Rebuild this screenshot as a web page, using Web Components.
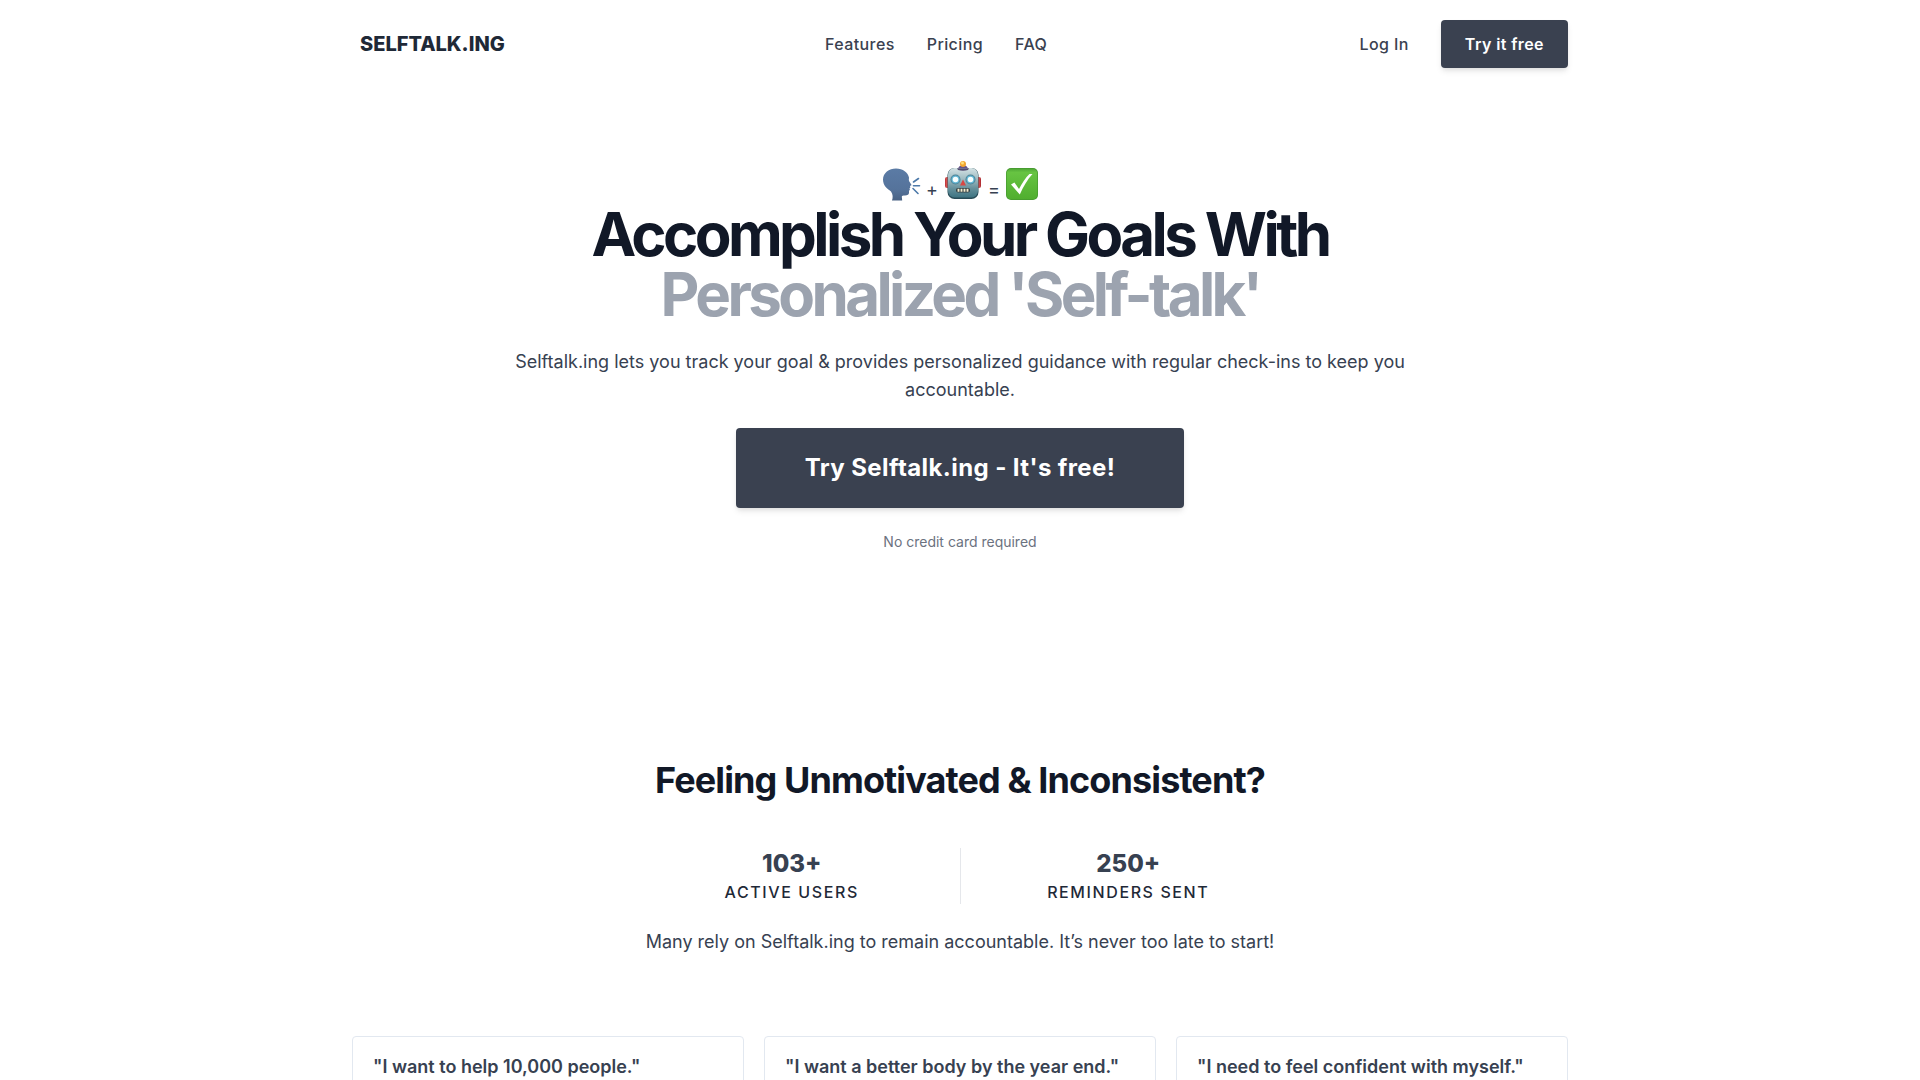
<!DOCTYPE html>
<html lang="en">
<head>
<meta charset="utf-8">
<title>Selftalk.ing</title>
<style>
html{scrollbar-width:none}
body{margin:0;background:#fff;color:#374151;font-family:Inter,"Liberation Sans",sans-serif;font-size:16px;line-height:24px}
</style>
</head>
<body>
<landing-page></landing-page>
<script>
const define = (name, html) => {
  const template = document.createElement('template');
  template.innerHTML = html;
  customElements.define(name, class extends HTMLElement {
    constructor() {
      super();
      this.attachShadow({mode: 'open'}).append(template.content.cloneNode(true));
    }
  });
};

define('action-button', `
<style>
:host{display:block;letter-spacing:.025em}
button{display:block;width:100%;border:0;border-radius:4px;background:#3a4150;color:#fff;font:inherit;font-weight:600;letter-spacing:inherit;line-height:24px;padding:12px 24px;white-space:nowrap;cursor:pointer;box-shadow:0 4px 6px -1px rgba(0,0,0,.1),0 2px 4px -1px rgba(0,0,0,.06)}
:host([size=large]) button{font-size:24px;font-weight:700;line-height:32px;padding:24px 32px}
</style>
<button type="button"><slot></slot></button>`);

define('site-header', `
<style>
:host{display:block}
header,nav,.account{display:flex;align-items:center}
header{justify-content:space-between;padding:20px 0}
nav,.account{gap:32px}
a{color:#3a4150;text-decoration:none;font-weight:500;letter-spacing:.025em}
.logo{font-size:20px;line-height:28px;font-weight:800;letter-spacing:0;color:#1f2937;padding:0 8px}
</style>
<header>
  <a class="logo" href="#">SELFTALK.ING</a>
  <nav><a href="#features">Features</a><a href="#pricing">Pricing</a><a href="#faq">FAQ</a></nav>
  <div class="account"><a href="#login">Log In</a><action-button>Try it free</action-button></div>
</header>`);

define('emoji-equation', `
<style>
:host{display:flex;justify-content:center;align-items:flex-end;gap:5px;height:44px}
svg{display:block;width:40px;height:40px}
span{font-size:18px;line-height:20px;padding-bottom:4px}
.robot{align-self:flex-start}
.check{width:34px}
</style>
<svg viewBox="0 0 40 40" aria-hidden="true">
  <defs><linearGradient id="h" x1="0" y1="0" x2="0" y2="1"><stop stop-color="#5b7ba5"/><stop offset=".65" stop-color="#55739b"/><stop offset="1" stop-color="#496284"/></linearGradient></defs>
  <path fill="url(#h)" d="M11 36.500c1-3 1-6-1-9-4-3-8-6-8-12C2 9 8 4.500 15 4.500c7 0 12 4 13 9 0 2-.5 2 .3 4l2 3c.4.8-.2 1.300-1.300 1.300l.3 2-1 1 .7 1-1 1v2c0 2-1.500 2.700-4 2.700-2 0-3 0-3.200 1.300l.4 3.700z"/>
  <path fill="none" stroke="#4c79a9" stroke-width="1.600" stroke-linecap="round" d="M32.500 18l5-3.500M32.500 21.700h6M32 24.500l5 5"/>
</svg>
<span>+</span>
<svg class="robot" viewBox="0 0 40 40" aria-hidden="true">
  <defs>
    <linearGradient id="r" x1="0" y1="0" x2="0" y2="1"><stop stop-color="#d5e3e5"/><stop offset=".4" stop-color="#9ab8bf"/><stop offset=".7" stop-color="#648f9a"/><stop offset="1" stop-color="#3e7482"/></linearGradient>
    <linearGradient id="e"><stop stop-color="#bd3036"/><stop offset=".5" stop-color="#e66d67"/><stop offset="1" stop-color="#a9232b"/></linearGradient>
  </defs>
  <rect x="2" y="17" width="6" height="11" rx="2" fill="url(#e)"/><rect x="32" y="17" width="6" height="11" rx="2" fill="url(#e)"/>
  <path d="M15 9c.3-2.500 2-3.800 5-3.800s4.700 1.300 5 3.800z" fill="#66558b"/>
  <circle cx="20" cy="4" r="3" fill="#f3a62e"/><circle cx="19.500" cy="3" r="1.500" fill="#ffe07b"/>
  <rect x="4.500" y="8" width="31" height="31" rx="7" fill="#294c57"/>
  <rect x="5" y="8" width="30" height="29.500" rx="6.500" fill="url(#r)"/>
  <path d="M14 8.300h12l-1 1.700q-5 1.500-10 0z" fill="#514a70"/>
  <circle cx="12.500" cy="19.500" r="5" fill="#4e8295"/><circle cx="27.500" cy="19.500" r="5" fill="#4e8295"/>
  <circle cx="12.500" cy="19.500" r="4" fill="#62b7d4"/><circle cx="27.500" cy="19.500" r="4" fill="#62b7d4"/>
  <circle cx="12.500" cy="19.500" r="2.800" fill="#f7ffff"/><circle cx="27.500" cy="19.500" r="2.800" fill="#f7ffff"/>
  <path d="M20 19.500l3 6h-6z" fill="#d94743"/>
  <rect x="13" y="28" width="14" height="4.500" rx="2" fill="#344044"/>
  <path d="M15.500 28.700v3m3-3v3m3-3v3m3-3v3" stroke="#f5edcf" stroke-width="1.900"/>
</svg>
<span>=</span>
<svg class="check" viewBox="0 0 34 40" aria-hidden="true">
  <defs><linearGradient id="c" x1="0" y1="0" x2="0" y2="1"><stop stop-color="#4fa735"/><stop offset=".12" stop-color="#67c442"/><stop offset="1" stop-color="#50ae2f"/></linearGradient></defs>
  <rect x="1" y="4" width="32" height="32" rx="5" fill="#45992f"/><rect x="1.700" y="4.700" width="30.600" height="30.600" rx="4.500" fill="url(#c)"/>
  <path d="M6 20.500l3.400-2 4.600 6.500C17 19 20.500 13.800 24.500 10h3C22.500 15.500 18.500 22 14.800 30.500z" fill="#fff"/>
</svg>`);

define('hero-section', `
<style>
:host{display:flex;flex-direction:column;align-items:center;padding:72px 0 192px;text-align:center}
h1{margin:0;font-size:60px;line-height:60px;font-weight:700;letter-spacing:-.06em;color:#111827}
h1 span{display:block;color:#9ca3af}
p{margin:0}
.lead{margin:24px 0;max-width:896px;font-size:18px;line-height:28px}
action-button{width:448px;max-width:100%}
.note{margin-top:24px;font-size:14px;line-height:20px;color:#6b7280}
</style>
<emoji-equation></emoji-equation>
<h1>Accomplish Your Goals With <span>Personalized 'Self-talk'</span></h1>
<p class="lead">Selftalk.ing lets you track your goal &amp; provides personalized guidance with regular check-ins to keep you accountable.</p>
<action-button size="large">Try Selftalk.ing - It's free!</action-button>
<p class="note">No credit card required</p>`);

define('stat-item', `
<style>
:host{display:flex;flex-direction:column;flex:1;text-align:center}
.value{font-size:24px;line-height:32px;font-weight:800}
.label{font-weight:500;letter-spacing:.1em;color:#1f2937}
</style>
<span class="value"><slot name="value"></slot></span><span class="label"><slot></slot></span>`);

define('proof-section', `
<style>
:host{display:flex;flex-direction:column;align-items:center;padding:16px 0 80px;text-align:center}
h2{margin:0 0 48px;font-size:36px;line-height:40px;font-weight:700;letter-spacing:-.025em;color:#111827}
.stats{display:flex;width:100%;max-width:672px}
stat-item:first-child{border-right:1px solid #e5e7eb}
p{margin:24px 0 0;font-size:18px;line-height:28px}
</style>
<h2>Feeling Unmotivated &amp; Inconsistent?</h2>
<div class="stats">
  <stat-item><span slot="value">103+</span>ACTIVE USERS</stat-item>
  <stat-item><span slot="value">250+</span>REMINDERS SENT</stat-item>
</div>
<p>Many rely on Selftalk.ing to remain accountable. It’s never too late to start!</p>`);

define('goal-card', `
<style>
:host{display:block;border:1px solid #e2e8f0;border-radius:4px;padding:16px 20px}
h3{margin:0;font-size:18px;line-height:28px;font-weight:600}
</style>
<h3><slot></slot></h3>`);

define('landing-page', `
<style>
:host{display:block;max-width:1216px;margin:0 auto;padding:0 32px}
.goals{display:grid;grid-template-columns:repeat(3,1fr);gap:20px}
</style>
<site-header></site-header>
<main>
  <hero-section></hero-section>
  <proof-section></proof-section>
  <section class="goals">
    <goal-card>"I want to help 10,000 people."</goal-card>
    <goal-card>"I want a better body by the year end."</goal-card>
    <goal-card>"I need to feel confident with myself."</goal-card>
  </section>
</main>`);
</script>
</body>
</html>
